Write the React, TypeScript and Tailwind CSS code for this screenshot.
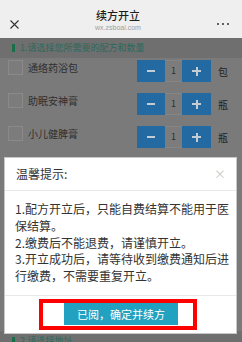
import React from "react";

const items = [
  { name: "通络药浴包", unit: "包" },
  { name: "助眠安神膏", unit: "瓶" },
  { name: "小儿健脾膏", unit: "瓶" },
];

const tips = [
  "1.配方开立后，只能自费结算不能用于医保结算。",
  "2.缴费后不能退费，请谨慎开立。",
  "3.开立成功后，请等待收到缴费通知后进行缴费，不需要重复开立。",
];

const font = { fontFamily: '"Noto Sans CJK SC", "Noto Sans", sans-serif' };

function Stepper() {
  return (
    <div className="flex h-[22px]">
      <button className="w-[28px] h-full bg-[#236aa3] flex items-center justify-center">
        <span className="w-[8px] h-[2px] bg-[#c4ccd4]" />
      </button>
      <div className="w-[17px] h-full bg-[#7c7c7c] border-y border-[#858585] flex items-center justify-center text-[9px] text-[#2e2e2e]">
        1
      </div>
      <button className="w-[29px] h-full bg-[#236aa3] flex items-center justify-center relative">
        <span className="w-[9px] h-[2px] bg-[#c4ccd4]" />
        <span className="absolute w-[2px] h-[9px] bg-[#c4ccd4]" />
      </button>
    </div>
  );
}

export default function App() {
  return (
    <div className="w-[242px] h-[342px] relative overflow-hidden flex flex-col bg-[#7a7a7a]" style={font}>
      {/* 顶部标题栏 */}
      <div className="h-[38px] bg-[#efefef] flex items-center px-[10px] shrink-0">
        <svg width="9" height="9" viewBox="0 0 9 9" className="mt-[10px]">
          <path d="M0.5 0.5 L8.5 8.5 M8.5 0.5 L0.5 8.5" stroke="#333" strokeWidth="1.1" />
        </svg>
        <div className="flex-1 flex flex-col items-center pt-[2px]">
          <div className="text-[11px] leading-[14px] font-medium text-[#1e1e1e]">续方开立</div>
          <div className="text-[7px] leading-[10px] text-[#a0a0a0] mt-[1px]" style={{ fontFamily: '"Liberation Sans", sans-serif' }}>
            wx.zsboai.com
          </div>
        </div>
        <div className="flex gap-[3px] mt-[10px] mr-[3px]">
          <span className="w-[2px] h-[2px] rounded-full bg-[#333]" />
          <span className="w-[2px] h-[2px] rounded-full bg-[#333]" />
          <span className="w-[2px] h-[2px] rounded-full bg-[#333]" />
        </div>
      </div>

      {/* 区块一 */}
      <div className="h-[20px] bg-[#6f6f6f] flex items-center pl-[12px] shrink-0">
        <span className="w-[3px] h-[8px] bg-[#17704a]" />
        <span className="ml-[5px] text-[9px] text-[#2a6a5c]">1.请选择您所需要的配方和数量</span>
      </div>

      {items.map((it) => (
        <div key={it.name} className="h-[33px] flex items-start pl-[8px] pr-[14px] pt-[2px] shrink-0">
          <span className="w-[15px] h-[15px] border border-[#8a8a8a] bg-[#7c7c7c]" />
          <span className="ml-[5px] text-[10px] leading-[15px] text-[#2f2f2f]">{it.name}</span>
          <div className="ml-auto flex items-center">
            <Stepper />
            <span className="ml-[7px] text-[10px] text-[#222] w-[10px]">{it.unit}</span>
          </div>
        </div>
      ))}

      <div className="h-[174px] shrink-0" />

      <div className="h-[20px] bg-[#6f6f6f] flex items-center pl-[12px] shrink-0">
        <span className="w-[3px] h-[8px] bg-[#17704a]" />
        <span className="ml-[5px] text-[9px] text-[#2a6a5c]">2.请选择地址</span>
      </div>

      {/* 温馨提示弹窗 */}
      <div className="absolute left-[4px] top-[157px] w-[233px] h-[177px] bg-white border border-[#c8c8c8] flex flex-col">
        <div className="h-[33px] flex items-center justify-between pl-[11px] pr-[10px] border-b border-[#e8e8e8]">
          <span className="text-[12px] text-[#333]">温馨提示:</span>
          <span className="text-[12px] text-[#c8c8c8]">×</span>
        </div>
        <div className="pl-[10px] pr-[5px] py-[10px] text-[12px] leading-[16.8px] text-[#333] border-b border-[#e8e8e8]">
          {tips.map((t) => (
            <p key={t}>{t}</p>
          ))}
        </div>
        <div className="flex-1 flex items-center pl-[59px]">
          <button className="w-[114px] h-[22px] bg-[#22a2c0] text-white text-[11px] flex items-center justify-center">
            已阅，确定并续方
          </button>
        </div>
      </div>

      {/* 红框标注 */}
      <div className="absolute left-[39px] top-[299px] w-[158px] h-[31px] border-[4px] border-[#ff0000]" />
    </div>
  );
}
